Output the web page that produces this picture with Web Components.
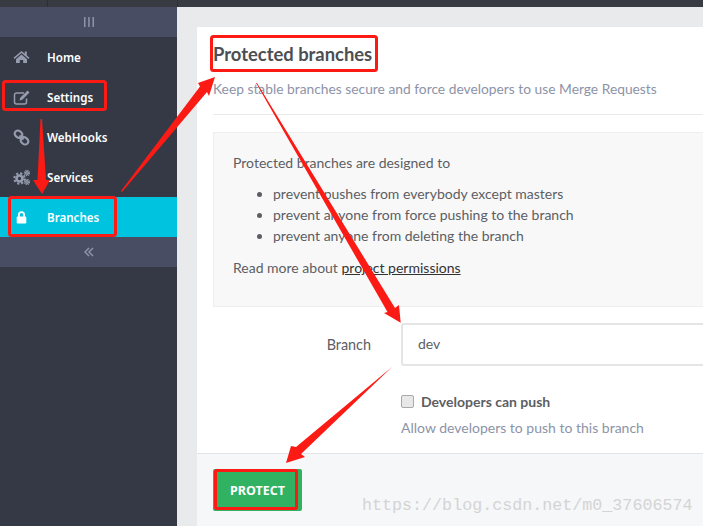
<!DOCTYPE html>
<html>
<head>
<meta charset="utf-8">
<title>Protected branches</title>
<style>
  html, body { margin: 0; height: 100%; overflow: hidden; }
  body { font-family: "Noto Sans", sans-serif; }
</style>
</head>
<body>
<app-shell>
  <side-nav slot="side">
    <nav-item label="Home" icon="home"></nav-item>
    <nav-item label="Settings" icon="edit"></nav-item>
    <nav-item label="WebHooks" icon="link"></nav-item>
    <nav-item label="Services" icon="cogs"></nav-item>
    <nav-item label="Branches" icon="lock" active></nav-item>
  </side-nav>
  <branch-panel slot="main"></branch-panel>
</app-shell>
<note-layer></note-layer>

<script>
const ICONS = {
  home: '<path d="M8.500 2 .5 8.800l1 1.200 7-6 7 6 1-1.200-2.700-2.300V2.600h-2v2.200zM3 10.200V14h3.800v-3h3.400v3H14v-3.800L8.500 5.400z"/>',
  edit: '<path fill="none" stroke="currentColor" stroke-width="1.500" d="M13.500 9.500V13a2 2 0 0 1-2 2H3.500a2 2 0 0 1-2-2V6a2 2 0 0 1 2-2H11"/><path d="M14.500 1.500l2 2-7.200 7.300-2.900.8.800-2.900z"/>',
  link: '<g fill="none" stroke="currentColor" stroke-width="2.200"><rect x="1.500" y="2" width="8" height="6.400" rx="3.200" transform="rotate(40 5.500 5.200)"/><rect x="7.500" y="8.600" width="8" height="6.400" rx="3.200" transform="rotate(40 11.500 11.800)"/><path d="M6.500 6.500l4 4"/></g>',
  cogs: '<g fill="none" stroke="currentColor"><circle cx="6.500" cy="9.500" r="3" stroke-width="2.600"/><circle cx="6.500" cy="9.500" r="5.200" stroke-width="2" stroke-dasharray="2.200 1.880"/><circle cx="14" cy="4" r="1.300" stroke-width="1.500"/><circle cx="14" cy="4" r="2.600" stroke-width="1.200" stroke-dasharray="1.200 .85"/><circle cx="14" cy="13" r="1.300" stroke-width="1.500"/><circle cx="14" cy="13" r="2.600" stroke-width="1.200" stroke-dasharray="1.200 .85"/></g>',
  lock: '<path d="M5 7.500V5.800a3.500 3.500 0 0 1 7 0v1.700h.3a1 1 0 0 1 1 1V13.500a1 1 0 0 1-1 1H4.700a1 1 0 0 1-1-1V8.500a1 1 0 0 1 1-1zm1.800 0h3.400V5.800a1.700 1.700 0 0 0-3.400 0z"/>'
};

class AppShell extends HTMLElement {
  constructor() {
    super();
    this.attachShadow({ mode: 'open' }).innerHTML = `
    <style>
      :host { display: grid; grid-template-rows: 7px 1fr; height: 526px; width: 703px; overflow: hidden; }
      .top { background: #383c42; display: flex; }
      .top i { width: 47px; border-right: 1px solid #2c2f34; }
      .top i + i { width: 129px; }
      .body { display: grid; grid-template-columns: 177px 1fr; min-height: 0; }
      .main { background: #e9eaec; padding: 20px 0 0 20px; min-width: 0; overflow: hidden; }
    </style>
    <div class="top"><i></i><i></i></div>
    <div class="body">
      <slot name="side"></slot>
      <div class="main"><slot name="main"></slot></div>
    </div>`;
  }
}

class SideNav extends HTMLElement {
  constructor() {
    super();
    this.attachShadow({ mode: 'open' }).innerHTML = `
    <style>
      :host { display: flex; flex-direction: column; background: #353946; }
      .toggle { height: 30px; background: #484d63; color: #8d93a8; display: flex; align-items: center; justify-content: center; }
      svg { display: block; }
    </style>
    <div class="toggle">
      <svg width="12" height="10" viewBox="0 0 12 10" fill="currentColor"><rect x="1" width="1.500" height="10"/><rect x="5.200" width="1.500" height="10"/><rect x="9.500" width="1.500" height="10"/></svg>
    </div>
    <slot></slot>
    <div class="toggle">
      <svg width="10" height="10" viewBox="0 0 10 10" fill="none" stroke="currentColor" stroke-width="1.500"><path d="M5 1 1 5l4 4M9 1 5 5l4 4"/></svg>
    </div>`;
  }
}

class NavItem extends HTMLElement {
  constructor() {
    super();
    this.attachShadow({ mode: 'open' });
  }
  connectedCallback() {
    const icon = ICONS[this.getAttribute('icon')];
    this.shadowRoot.innerHTML = `
    <style>
      :host { display: flex; align-items: center; height: 40px; padding-left: 13px; color: #fff; font-family: "Noto Sans", sans-serif; font-size: 11.600px; font-weight: 600; }
      :host([active]) { background: #00c3e0; }
      svg { width: 17px; height: 17px; color: #959cad; fill: currentColor; margin-right: 17px; flex: none; }
      :host([active]) svg { color: #fff; }
    </style>
    <svg viewBox="0 0 17 17">${icon}</svg><span>${this.getAttribute('label')}</span>`;
  }
}

class BranchPanel extends HTMLElement {
  constructor() {
    super();
    this.attachShadow({ mode: 'open' }).innerHTML = `
    <style>
      :host { display: block; background: #fff; height: 499px; font-family: Lato, sans-serif; color: #5c5e63; font-size: 14px; position: relative; }
      .inner { padding: 0 0 0 16px; }
      h3 { margin: 0; padding-top: 14px; height: 27px; line-height: 27px; font-size: 18.400px; font-weight: 700; color: #4c4e53; }
      .lead { margin: 0; padding-top: 11px; height: 19px; line-height: 19px; color: #8c93a8; font-size: 13.800px; }
      hr { border: 0; border-top: 1px solid #e9eaec; margin: 16px 0 17px; }
      .info { background: #f8f8f9; border: 1px solid #eeeeef; border-right: 0; height: 175px; padding: 20px 0 0 19px; box-sizing: border-box; }
      .info p { margin: 0; line-height: 20px; }
      .info ul { margin: 10px 0 12px; padding-left: 40px; line-height: 21px; }
      a { color: #333; text-decoration: underline; }
      .row { display: grid; grid-template-columns: 188px 1fr; margin-top: 16px; }
      .row label { text-align: right; padding: 12px 30px 0 0; line-height: 20px; font-size: 14.400px; }
      .input { border: 2px solid #e5e5e5; border-right: 0; border-radius: 3px 0 0 3px; padding: 0 15px; line-height: 38px; height: 39px; }
      .check { display: flex; align-items: center; margin: 25px 0 0 188px; height: 20px; gap: 7px; font-weight: 700; }
      .check span.box { width: 11px; height: 11px; border: 1px solid #a9a9a9; border-radius: 2px; background: #e8e8e8; }
      .help { margin: 7px 0 0 188px; line-height: 20px; color: #8c93a8; }
      .foot { position: absolute; left: 0; right: 0; top: 426px; bottom: 0; background: #f6f7f9; border-top: 1px solid #e3e4e7; padding: 15px 16px; }
      .btn { display: inline-flex; align-items: center; justify-content: center; width: 89px; height: 42px; box-sizing: border-box; background: #31b162; border-radius: 2px; color: #fff; font-weight: 700; font-size: 12.500px; font-family: "Noto Sans", sans-serif; }
    </style>
    <div class="inner">
      <h3>Protected branches</h3>
      <p class="lead">Keep stable branches secure and force developers to use Merge Requests</p>
      <hr>
      <div class="info">
        <p>Protected branches are designed to</p>
        <ul>
          <li>prevent pushes from everybody except masters</li>
          <li>prevent anyone from force pushing to the branch</li>
          <li>prevent anyone from deleting the branch</li>
        </ul>
        <p>Read more about <a>project permissions</a></p>
      </div>
      <div class="row"><label>Branch</label><div class="input">dev</div></div>
      <div class="check"><span class="box"></span><span>Developers can push</span></div>
      <div class="help">Allow developers to push to this branch</div>
    </div>
    <div class="foot"><span class="btn">PROTECT</span></div>`;
  }
}

// red marks drawn on top of the screenshot, plus the blog watermark
class NoteLayer extends HTMLElement {
  constructor() {
    super();
    this.attachShadow({ mode: 'open' }).innerHTML = `
    <style>
      :host { position: absolute; left: 0; top: 0; width: 703px; height: 526px; pointer-events: none; }
      svg { position: absolute; left: 0; top: 0; }
      rect { fill: none; stroke: #fb1b14; stroke-width: 3; }
      polygon { fill: #fb1b14; }
      .mark { position: absolute; left: 362px; top: 496px; font: 16.700px/20px "Liberation Mono", monospace; color: #d4d4d4; white-space: nowrap; }
    </style>
    <svg width="703" height="526">
      <rect x="3.500" y="81.500" width="102" height="28" rx="2"/>
      <rect x="9.500" y="197.500" width="106" height="38" rx="2"/>
      <rect x="211.500" y="36.500" width="165" height="34" rx="2"/>
      <rect x="215.500" y="470.500" width="81" height="38" rx="1"/>
      <polygon points="40.500,119 42,119 46,180 50,180 42,194 33,180 37.500,180"/>
      <polygon points="121,191 200,86.500 198,83 215,77 209,96 207,92 122,192"/>
      <polygon points="256,83 257,83 395,308 399,305 400.700,322.700 384,313 387.500,312"/>
      <polygon points="392,367 296,447 291,446 286,463 305,457 301,454"/>
    </svg>
    <div class="mark">https://blog.csdn.net/m0_37606574</div>`;
  }
}

customElements.define('app-shell', AppShell);
customElements.define('side-nav', SideNav);
customElements.define('nav-item', NavItem);
customElements.define('branch-panel', BranchPanel);
customElements.define('note-layer', NoteLayer);
</script>
</body>
</html>
